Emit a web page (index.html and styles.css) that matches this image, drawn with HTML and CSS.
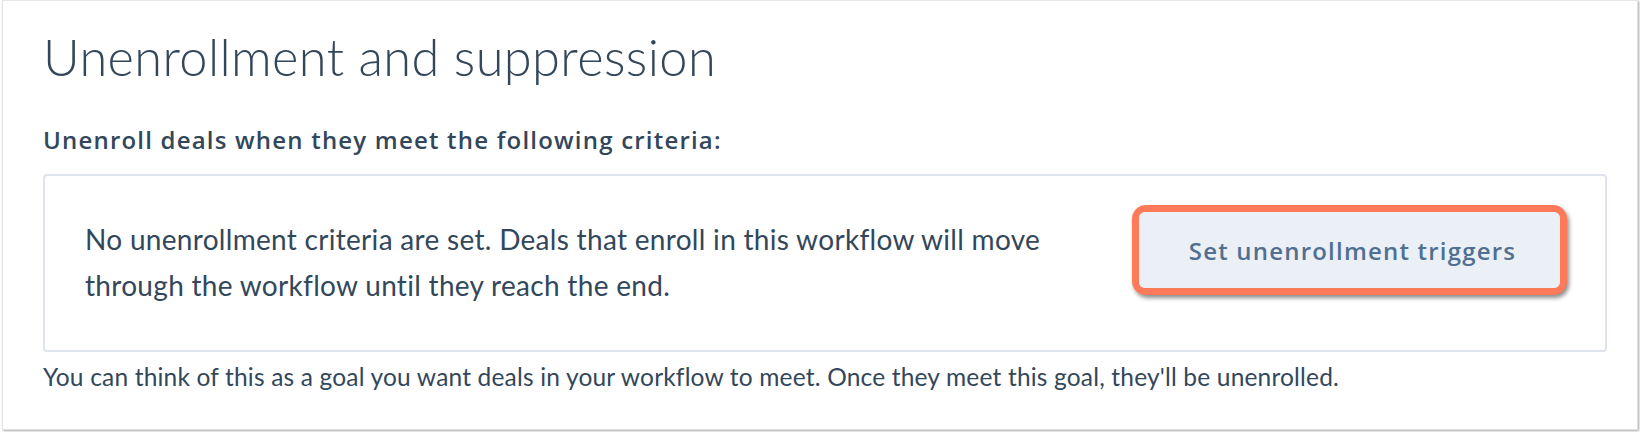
FILE: index.html
```html
<!DOCTYPE html>
<html lang="en">
<head>
<meta charset="utf-8">
<title>Unenrollment and suppression</title>
<link rel="stylesheet" href="styles.css">
</head>
<body>
<section class="card">
  <h1 class="title">Unenrollment and suppression</h1>
  <h2 class="subtitle">Unenroll deals when they meet the following criteria:</h2>
  <div class="criteria">
    <p class="criteria-text">No unenrollment criteria are set. Deals that enroll in this workflow will move through the workflow until they reach the end.</p>
    <div class="highlight">
      <button class="btn" type="button">Set unenrollment triggers</button>
    </div>
  </div>
  <p class="hint">You can think of this as a goal you want deals in your workflow to meet. Once they meet this goal, they'll be unenrolled.</p>
</section>
</body>
</html>
```

FILE: styles.css
```css
html, body {
  margin: 0;
  padding: 0;
  background: #ffffff;
}
body {
  font-family: Lato, "Open Sans", sans-serif;
  color: #33475b;
  width: 1640px;
  height: 432px;
  overflow: hidden;
}
.card {
  box-sizing: border-box;
  margin: 0 2px 0 2px;
  height: 430px;
  border: 1px solid #e2e2e2;
  border-top: 1px solid #e6e6e6;
  box-shadow: 1px 1px 2px rgba(0,0,0,0.35);
  padding: 0 30px 0 40px;
  background: #fff;
}
.title {
  margin: 0;
  padding-top: 27px;
  font-family: Lato, sans-serif;
  font-size: 50.5px;
  font-weight: 300;
  line-height: 58px;
  letter-spacing: 0.4px;
  color: #33475b;
}
.subtitle {
  margin: 40px 0 0 0;
  font-family: "Open Sans", Lato, sans-serif;
  font-size: 24px;
  font-weight: 600;
  line-height: 28px;
  letter-spacing: 1.2px;
  color: #33475b;
}
.criteria {
  margin-top: 20px;
  box-sizing: border-box;
  height: 178px;
  border: 2px solid #dfe3eb;
  border-radius: 4px;
  display: flex;
  align-items: center;
  justify-content: space-between;
  padding: 0 38px 3px 40px;
}
.criteria-text {
  margin: 0;
  width: 990px;
  font-size: 28px;
  line-height: 46px;
  letter-spacing: 0.3px;
  color: #33475b;
}
.highlight {
  align-self: flex-start;
  margin-top: 29px;
  border: 7px solid #ff7a59;
  border-radius: 14px;
  box-shadow: 2px 3px 4px rgba(0,0,0,0.45);
  background: #eaf0f6;
}
.btn {
  display: block;
  width: 421px;
  height: 76px;
  border: 0;
  border-radius: 6px;
  background: #eaf0f6;
  color: #516f90;
  font-family: "Open Sans", Lato, sans-serif;
  font-size: 24px;
  font-weight: 600;
  letter-spacing: 1.2px;
  padding: 0 0 0 6px;
}
.hint {
  margin: 10px 0 0 0;
  font-size: 24.5px;
  line-height: 30px;
  letter-spacing: 0.18px;
  color: #33475b;
}
```
